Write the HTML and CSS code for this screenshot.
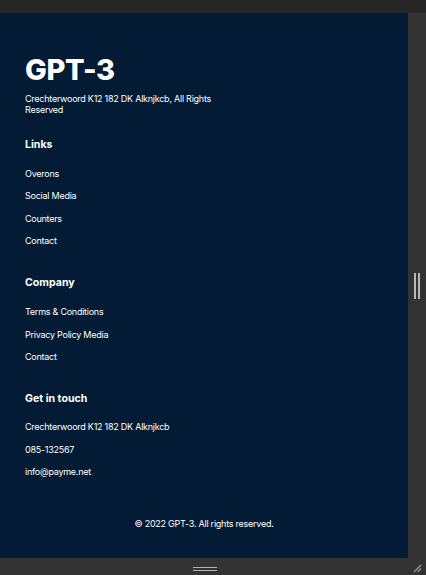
FILE: index.html
```html
<!DOCTYPE html>
<html lang="nl">
<head>
<meta charset="utf-8">
<title>GPT-3 footer</title>
<link rel="stylesheet" href="styles.css">
</head>
<body>
<div class="window">
  <div class="topbar"></div>
  <div class="middle">
    <footer class="footer">
      <div class="brand">
        <h1 class="logo">GPT-3</h1>
        <p class="brand-text">Crechterwoord K12 182 DK Alknjkcb, All Rights Reserved</p>
      </div>
      <div class="col">
        <h4 class="col-title">Links</h4>
        <ul class="col-list">
          <li>Overons</li>
          <li>Social Media</li>
          <li>Counters</li>
          <li>Contact</li>
        </ul>
      </div>
      <div class="col">
        <h4 class="col-title">Company</h4>
        <ul class="col-list">
          <li>Terms &amp; Conditions</li>
          <li>Privacy Policy Media</li>
          <li>Contact</li>
        </ul>
      </div>
      <div class="col col-contact">
        <h4 class="col-title">Get in touch</h4>
        <ul class="col-list">
          <li>Crechterwoord K12 182 DK Alknjkcb</li>
          <li>085-132567</li>
          <li>info@payme.net</li>
        </ul>
      </div>
      <p class="copy">© 2022 GPT-3. All rights reserved.</p>
    </footer>
    <div class="gutter">
      <div class="vhandle"><span></span><span></span></div>
    </div>
  </div>
  <div class="bottombar">
    <div class="hhandle"><span></span><span></span></div>
    <svg class="grip" width="10" height="10" viewBox="0 0 10 10">
      <path d="M9 2 L2 9 M9 5.5 L5.5 9" stroke="#9a9a9a" stroke-width="1.2" fill="none"/>
    </svg>
  </div>
</div>
</body>
</html>
```

FILE: styles.css
```css
html, body {
  margin: 0;
  padding: 0;
  background: #333333;
}
.window {
  width: 426px;
  height: 575px;
  display: flex;
  flex-direction: column;
  background: #333333;
}
.topbar {
  height: 13px;
  background: #262626;
  flex: none;
}
.middle {
  display: flex;
  height: 545px;
  flex: none;
}
.footer {
  width: 408px;
  height: 545px;
  box-sizing: border-box;
  background: #031b34;
  padding: 42px 25px 0 25px;
  font-family: "Inter", "Noto Sans", sans-serif;
  color: #ffffff;
  display: flex;
  flex-direction: column;
}
.logo {
  margin: 0;
  font-size: 29px;
  line-height: 29px;
  font-weight: 800;
  letter-spacing: -0.4px;
}
.brand-text {
  margin: 10px 0 0 0;
  width: 200px;
  font-size: 9px;
  line-height: 10.5px;
  letter-spacing: -0.25px;
}
.col {
  margin-top: 29px;
}
.brand + .col {
  margin-top: 22.5px;
}
.col-title {
  margin: 0;
  font-size: 10.6px;
  line-height: 14px;
  font-weight: 700;
}
.col-list {
  list-style: none;
  margin: 16px 0 0 0;
  padding: 0;
}
.col-contact .col-list {
  margin-top: 15px;
}
.col-list li {
  font-size: 9px;
  line-height: 12px;
  margin-bottom: 10.6px;
  letter-spacing: -0.25px;
}
.col-contact .col-list li {
  margin-bottom: 10.3px;
}
.col-list li:last-child {
  margin-bottom: 0;
}
.copy {
  margin: 40px 0 0 0;
  text-align: center;
  font-size: 9px;
  line-height: 12px;
  letter-spacing: -0.25px;
}
.gutter {
  width: 18px;
  background: #333333;
  display: flex;
  align-items: center;
  justify-content: center;
}
.vhandle {
  display: flex;
  gap: 2px;
}
.vhandle span {
  display: block;
  width: 2px;
  height: 26px;
  background: #b8b8b8;
}
.bottombar {
  height: 17px;
  background: #333333;
  display: flex;
  align-items: center;
  justify-content: center;
  position: relative;
  flex: none;
}
.hhandle {
  display: flex;
  flex-direction: column;
  gap: 2px;
  margin-left: -16px;
  margin-top: 4px;
}
.hhandle span {
  display: block;
  width: 24px;
  height: 1px;
  background: #b4b4b4;
}
.grip {
  position: absolute;
  right: 4px;
  bottom: 2px;
}
```
